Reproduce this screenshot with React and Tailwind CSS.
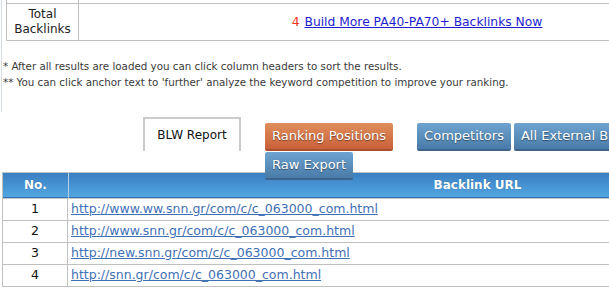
import React from 'react';

const LINKS = [
  'http://www.ww.snn.gr/com/c/c_063000_com.html',
  'http://www.snn.gr/com/c/c_063000_com.html',
  'http://new.snn.gr/com/c/c_063000_com.html',
  'http://snn.gr/com/c/c_063000_com.html',
];

const orangeBtn =
  'shrink-0 h-[28px] px-[7px] rounded-[2px] text-[13px] text-white [text-shadow:0_1px_1px_rgba(0,0,0,0.45)] bg-gradient-to-b from-[#e08e5c] to-[#c9603a] border-b-2 border-[#a94f2e] flex items-center whitespace-nowrap';
const blueBtn =
  'shrink-0 h-[28px] px-[7px] rounded-[2px] text-[13px] text-white [text-shadow:0_1px_1px_rgba(0,0,0,0.45)] bg-gradient-to-b from-[#6fa4d0] to-[#4a7ba8] border-b-2 border-[#3d648c] flex items-center whitespace-nowrap';

export default function App() {
  return (
    <div className="w-[609px] h-[295px] overflow-hidden bg-white font-['DejaVu_Sans',sans-serif] text-[#222]">
      <div className="ml-[1px] border-l border-[#d3dbe5] h-[112px]">
        {/* Summary table */}
        <div className="ml-[4px] w-[750px]">
          <div className="h-[3px] w-[73px] border-l border-r border-[#c0c0c0]" />
          <div className="flex h-[38px] border border-[#c0c0c0]">
            <div className="w-[72px] shrink-0 border-r border-[#c0c0c0] flex items-center justify-center text-center text-[12px] leading-[15px]">
              Total
              <br />
              Backlinks
            </div>
            <div className="flex-1 flex items-center justify-center text-[12.3px]">
              <span className="text-[#f2381c] mr-[5px]">4</span>
              <a href="#" className="text-[#1d1dcf] underline">
                Build More PA40-PA70+ Backlinks Now
              </a>
            </div>
          </div>
        </div>

        {/* Notes */}
        <div className="mt-[17px] pl-[1px] text-[10.3px] leading-[16px] text-[#3a3a3a] whitespace-nowrap">
          <p>* After all results are loaded you can click column headers to sort the results.</p>
          <p>** You can click anchor text to 'further' analyze the keyword competition to improve your ranking.</p>
        </div>
      </div>

      {/* Tabs */}
      <div className="flex h-[55px] mt-[5px] pl-[143px] w-[1000px]">
        <div className="shrink-0 w-[98px] h-[34px] border-[2px] border-b-0 border-[#cbcbcb] flex items-center justify-center text-[12px] text-[#111] whitespace-nowrap">
          BLW Report
        </div>
        <div className="shrink-0 ml-[24px] mt-[6px] flex flex-col gap-[1px] relative z-10">
          <div className="flex">
            <div className={orangeBtn}>Ranking Positions</div>
            <div className={`${blueBtn} ml-[24px]`}>Competitors</div>
            <div className={`${blueBtn} ml-[3px]`}>All External Backlinks</div>
          </div>
          <div className="flex">
            <div className={`${blueBtn} h-[27px]`}>Raw Export</div>
          </div>
        </div>
      </div>

      {/* Results table */}
      <div className="ml-[2px] w-[884px]">
        <div className="flex h-[27px] border-t border-[#c0c0c0] border-b border-b-[#c8c8c8] border-l">
          <div className="w-[65px] shrink-0 flex items-center justify-center bg-gradient-to-b from-[#3a7fc2] to-[#52a6e2] border-b border-[#3470ad] text-white font-bold text-[12px] [text-shadow:0_0_1px_rgba(0,0,0,0.3)]">
            No.
          </div>
          <div className="w-px bg-[#b9cfe4]" />
          <div className="flex-1 flex items-center justify-center bg-gradient-to-b from-[#3a7fc2] to-[#52a6e2] border-b border-[#3470ad] text-white font-bold text-[12px] [text-shadow:0_0_1px_rgba(0,0,0,0.3)]">
            Backlink URL
          </div>
        </div>
        {LINKS.map((url, i) => (
          <div key={url} className="flex h-[22px] border-b border-l border-[#c0c0c0]">
            <div className="w-[65px] shrink-0 border-r border-[#c0c0c0] flex items-center justify-center text-[12.5px] text-[#111]">
              {i + 1}
            </div>
            <div className="flex-1 flex items-center pl-[3px] text-[12.5px]">
              <a href="#" className="text-[#3f70b6] underline">
                {url}
              </a>
            </div>
          </div>
        ))}
      </div>
    </div>
  );
}
